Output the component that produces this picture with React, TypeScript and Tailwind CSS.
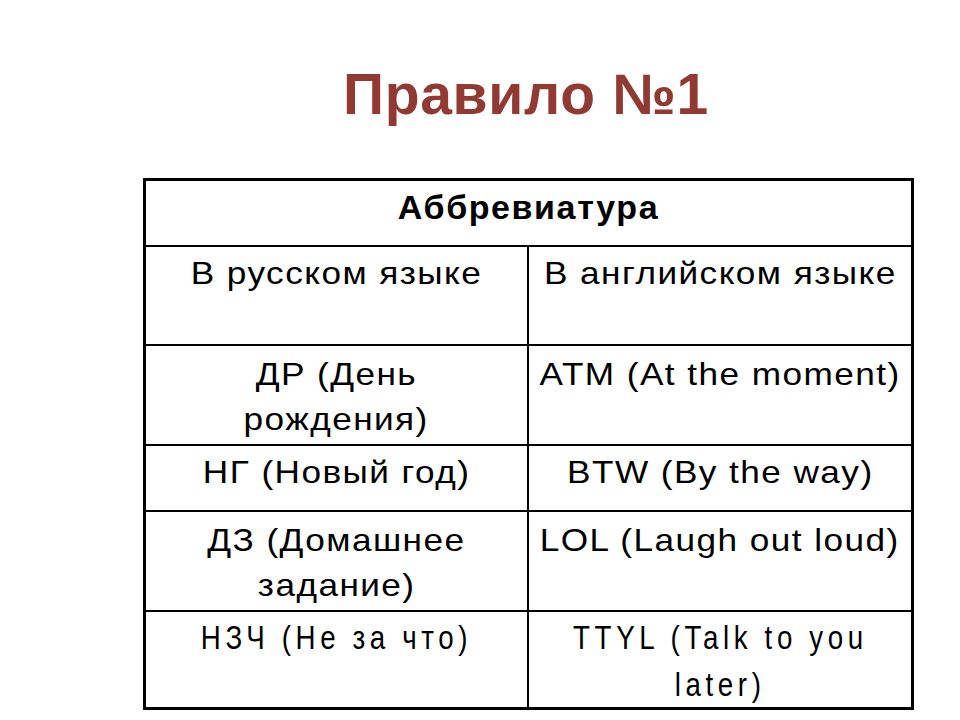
type Row = { ru: string[]; en: string[]; h: string; pt: string; narrow?: boolean };

const rows: Row[] = [
  { ru: ["В русском языке"], en: ["В английском языке"], h: "h-[99px]", pt: "pt-[4px]" },
  { ru: ["ДР (День", "рождения)"], en: ["ATM (At the moment)"], h: "h-[100px]", pt: "pt-[6px]" },
  { ru: ["НГ (Новый год)"], en: ["BTW (By the way)"], h: "h-[66px]", pt: "pt-[4px]" },
  { ru: ["ДЗ (Домашнее", "задание)"], en: ["LOL (Laugh out loud)"], h: "h-[100px]", pt: "pt-[6px]" },
  { ru: ["НЗЧ (Не за что)"], en: ["TTYL (Talk to you", "later)"], h: "h-[97px]", pt: "pt-[2px]", narrow: true },
];

function Cell({ lines, narrow, right, pt }: { lines: string[]; narrow?: boolean; right?: boolean; pt: string }) {
  return (
    <div
      className={
        "flex flex-col items-center text-black " +
        pt +
        (right ? " border-l-2 border-black" : "") +
        (narrow ? " text-[33px] leading-[47px]" : " text-[32px] leading-[45px]")
      }
    >
      {lines.map((l) =>
        narrow ? (
          <span key={l} className="inline-block whitespace-nowrap tracking-[5.5px] scale-x-[0.84]">
            {l}
          </span>
        ) : (
          <span key={l} className="inline-block whitespace-nowrap tracking-[1.3px] scale-x-[1.1]">
            {l}
          </span>
        ),
      )}
    </div>
  );
}

export default function App() {
  return (
    <div className="w-[960px] h-[720px] bg-white [font-family:'Liberation_Sans',Arial,sans-serif] overflow-hidden">
      <h1 className="pt-[61px] pl-[343px] text-[57px] leading-[66px] tracking-[0.7px] font-bold text-[#913a34]">
        Правило №1
      </h1>
      <div className="ml-[143px] mt-[51px] w-[771px] border-[3px] border-black">
        <div className="h-[64px] flex justify-center pt-[6px] text-[34px] leading-[40px] tracking-[1.6px] font-bold text-black">
          Аббревиатура
        </div>
        {rows.map((r, i) => (
          <div key={i} className={"grid grid-cols-[381px_1fr] border-t-2 border-black " + r.h}>
            <Cell lines={r.ru} narrow={r.narrow} pt={r.pt} />
            <Cell lines={r.en} narrow={r.narrow} pt={r.pt} right />
          </div>
        ))}
      </div>
    </div>
  );
}
